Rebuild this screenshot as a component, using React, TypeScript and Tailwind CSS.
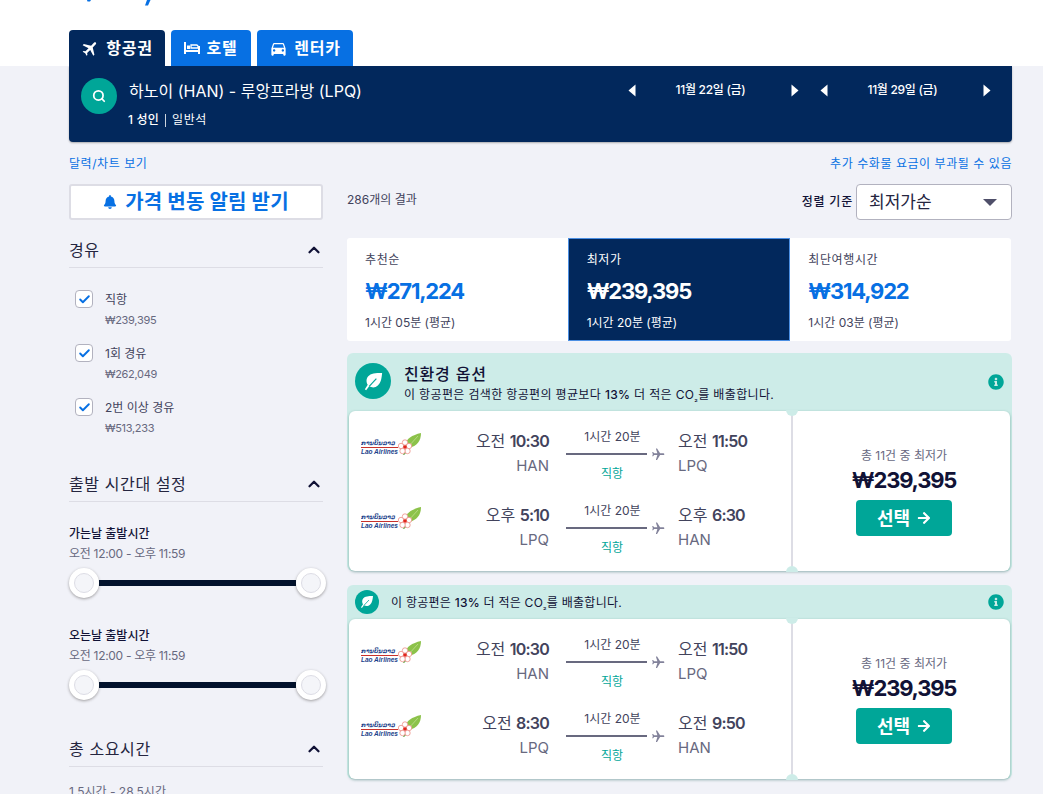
import React from "react";
import { Search, ChevronUp, Check } from "lucide-react";
import { FaBell, FaInfoCircle, FaArrowRight } from "react-icons/fa";
import { MdFlight, MdDirectionsCar } from "react-icons/md";

const FONT = "font-['Inter','Noto_Sans_CJK_KR',sans-serif]";

function Leaf({ size }: { size: number }) {
  return (
    <svg width={size} height={size} viewBox="0 0 24 24" fill="white">
      <path d="M21 3c-7 0-12 .5-14.500 3.500C4 9.500 4.500 13 6 15.500L3 20l1.300 1 3.200-4c2.800 1.600 6.500 1.700 9-.8C20 12.800 20.500 8 21 3z" />
      <path d="M7.500 17 15 9" stroke="#00a698" strokeWidth="1.200" fill="none" />
    </svg>
  );
}

function BedIcon() {
  return (
    <svg width="16" height="12" viewBox="0 0 16 12" fill="white">
      <rect x="0" y="0" width="2" height="12" />
      <rect x="14" y="4" width="2" height="8" />
      <rect x="0" y="8" width="16" height="2" />
      <rect x="3" y="3.500" width="3" height="3.500" />
      <path d="M7 3h5.500a1.500 1.500 0 0 1 1.500 1.500V6H7z" fill="none" stroke="white" strokeWidth="1.300" />
    </svg>
  );
}

function LaoLogo() {
  return (
    <div className="relative w-[60px] h-[22px] shrink-0">
      <div className="absolute left-0 top-[6px] w-[37px] text-[6px] leading-[8px] italic font-bold text-[#1b3f8b] font-['DejaVu_Sans',sans-serif] border-b border-[#c8322b] whitespace-nowrap overflow-hidden">ການບິນລາວ</div>
      <div className="absolute left-0 top-[15px] text-[6.500px] leading-[7px] italic font-extrabold text-[#1b3f8b] font-['Liberation_Sans',sans-serif] whitespace-nowrap">Lao Airlines</div>
      <svg className="absolute left-[36px] top-0" width="24" height="22" viewBox="0 0 24 22">
        <path d="M8 12C9 6 15 2 24 0c0 8-4 13-12 15z" fill="#8cc24a" />
        <path d="M11 14 21 3" stroke="#b5da7f" strokeWidth="1" />
        <path d="M6 22l3-4 1 1-3 3z" fill="#4e9a2e" />
        <circle cx="8" cy="9.500" r="2.700" fill="#fff" stroke="#ec8f88" strokeWidth=".8" />
        <circle cx="12" cy="13" r="2.700" fill="#fff" stroke="#ec8f88" strokeWidth=".8" />
        <circle cx="10.500" cy="18" r="2.700" fill="#fff" stroke="#ec8f88" strokeWidth=".8" />
        <circle cx="5.500" cy="18" r="2.700" fill="#fff" stroke="#ec8f88" strokeWidth=".8" />
        <circle cx="4" cy="13" r="2.700" fill="#fff" stroke="#ec8f88" strokeWidth=".8" />
        <circle cx="8" cy="14" r="1.800" fill="#e2261d" />
      </svg>
    </div>
  );
}

function Clock({ value }: { value: string }) {
  const [half, time] = value.split(" ");
  return (
    <div className="text-[16px] leading-[22px] text-[#42435c] whitespace-nowrap">
      {half} <span className="font-semibold tracking-[-0.8px]">{time}</span>
    </div>
  );
}

function Leg({ dep, from, arr, to }: { dep: string; from: string; arr: string; to: string }) {
  return (
    <div className="flex items-center h-[74px]">
      <div className="w-[70px] ml-[12px] self-start mt-[16px]">
        <LaoLogo />
      </div>
      <div className="w-[118px] text-right">
        <Clock value={dep} />
        <div className="text-[15px] leading-[24px] mt-[2px] text-[#68697f]">{from}</div>
      </div>
      <div className="w-[100px] ml-[17px] shrink-0 pt-[3px]">
        <div className="w-[92px] text-center text-[12px] leading-[18px] pl-[1px] text-[#42435c] whitespace-nowrap">1시간 20분</div>
        <div className="flex items-center gap-[4px] h-[14px] mt-[1px] mb-[4px]">
          <div className="w-[84px] h-[2px] bg-[#68697f]" />
          <MdFlight className="rotate-90 text-[#82829a]" size={15} />
        </div>
        <div className="w-[92px] text-center text-[12px] leading-[18px] text-[#00a698]">직항</div>
      </div>
      <div className="ml-[12px]">
        <Clock value={arr} />
        <div className="text-[15px] leading-[24px] mt-[2px] text-[#68697f]">{to}</div>
      </div>
    </div>
  );
}

function Ticket({ legs }: { legs: [string, string, string, string][] }) {
  return (
    <div className="relative flex h-[160px] mx-[2px] bg-white rounded-[6px] shadow-[0_1px_3px_rgba(0,80,70,0.4)]">
      <div className="w-[444px] py-[6px] border-r-2 border-[#dddde5]">
        {legs.map((l, i) => (
          <Leg key={i} dep={l[0]} from={l[1]} arr={l[2]} to={l[3]} />
        ))}
      </div>
      <div className="flex-1 flex flex-col items-center pt-[36px] pl-[5px]">
        <div className="text-[12px] leading-[17px] text-[#68697f] whitespace-nowrap">총 11건 중 최저가</div>
        <div className="text-[22px] leading-[28px] font-bold tracking-[-1.200px] text-[#111236] mt-[2px]">₩239,395</div>
        <div className="mt-[6px] w-[96px] h-[36px] bg-[#00a698] rounded-[4px] flex items-center justify-center gap-[7px] text-white text-[18px] font-bold">
          선택 <FaArrowRight size={14} />
        </div>
      </div>
      <div className="absolute left-[437px] top-[-1px] w-[12px] h-[6px] rounded-b-full bg-[#cdece8]" />
      <div className="absolute left-[437px] bottom-[-1px] w-[12px] h-[6px] rounded-t-full bg-[#cdece8]" />
    </div>
  );
}

const DIRECT1: [string, string, string, string] = ["오전 10:30", "HAN", "오전 11:50", "LPQ"];

function Co2Text() {
  return (
    <>
      <b className="font-medium">13%</b> 더 적은 CO<sub className="text-[8px] align-baseline">₂</sub>를 배출합니다.
    </>
  );
}

function Section({ title }: { title: string }) {
  return (
    <div className="flex items-center justify-between h-[35px] border-b border-[#dddde5]">
      <span className="text-[16px] tracking-[0.6px] text-[#25253f]">{title}</span>
      <ChevronUp size={18} strokeWidth={3} className="text-[#111236]" />
    </div>
  );
}

function Stop({ label, price }: { label: string; price: string }) {
  return (
    <div className="flex h-[54px] pl-[6px]">
      <div className="w-[18px] h-[18px] mt-[4px] bg-white border border-[#b2b2bf] rounded-[4px] flex items-center justify-center">
        <Check size={13} strokeWidth={3.500} className="text-[#0770e3]" />
      </div>
      <div className="ml-[12px]">
        <div className="text-[12px] leading-[18px] mt-[5px] text-[#42435c]">{label}</div>
        <div className="text-[11px] leading-[16px] mt-[3px] tracking-[-0.3px] text-[#68697f]">{price}</div>
      </div>
    </div>
  );
}

function Handle() {
  return (
    <div className="w-[30px] h-[30px] rounded-full bg-white shadow-[0_1px_3px_rgba(37,32,31,0.4)] flex items-center justify-center shrink-0">
      <div className="w-[20px] h-[20px] rounded-full bg-[#f4f5f9] border border-[#dddde5]" />
    </div>
  );
}

function Slider({ title }: { title: string }) {
  return (
    <div>
      <div className="text-[12px] leading-[18px] font-medium text-[#111236]">{title}</div>
      <div className="text-[12px] leading-[18px] mt-[2px] tracking-[-0.3px] text-[#68697f]">오전 12:00 - 오후 11:59</div>
      <div className="flex items-center mt-[5px] w-[257px]">
        <Handle />
        <div className="flex-1 h-[6px] bg-[#02122c]" />
        <Handle />
      </div>
    </div>
  );
}

function Summary({ label, price, sub, active }: { label: string; price: string; sub: string; active?: boolean }) {
  return (
    <div className={active ? "flex-1 h-full pl-[18px] pt-[12px] bg-[#02285c] border border-[#4b8fe3] text-white" : "flex-1 h-full pl-[18px] pt-[13px] text-[#42435c]"}>
      <div className="text-[12px] leading-[18px] tracking-[0.6px]">{label}</div>
      <div className={active ? "text-[22px] leading-[30px] mt-[7px] font-bold tracking-[-1.200px] text-white" : "text-[22px] leading-[30px] mt-[7px] font-bold tracking-[-1.200px] text-[#0770e3]"}>{price}</div>
      <div className="text-[12px] leading-[18px] mt-[8px]">{sub}</div>
    </div>
  );
}

function Triangle({ left }: { left?: boolean }) {
  return (
    <svg width="8" height="13" viewBox="0 0 8 13" fill="white">
      <path d={left ? "M7.500 .5v12L.5 6.500z" : "M.5 .5v12l7-6z"} />
    </svg>
  );
}

function DateStep({ label }: { label: string }) {
  return (
    <div className="flex items-center justify-between w-[171px]">
      <Triangle left />
      <span className="text-[12px] font-medium tracking-[-0.3px] text-white whitespace-nowrap mr-[6px]">{label}</span>
      <Triangle />
    </div>
  );
}

function Tab({ icon, label, active, w }: { icon: React.ReactNode; label: string; active?: boolean; w: string }) {
  return (
    <div className={`${w} h-[36px] rounded-t-[4px] flex items-center justify-center gap-[6px] text-white text-[16px] font-bold ${active ? "bg-[#02285c]" : "bg-[#0770e3]"}`}>
      {icon}
      <span className="tracking-[0.8px]">{label}</span>
    </div>
  );
}

export default function App() {
  return (
    <div className={`${FONT} w-[1043px] h-[794px] overflow-hidden bg-[#f1f2f8]`}>
      <div className="relative h-[66px] bg-white pl-[69px] pt-[30px]">
        <svg className="absolute left-[85px] top-0" width="68" height="6" viewBox="0 0 68 6" fill="#0770e3">
          <path d="M2 0h4L5 1.500H2.500z" />
          <path d="M62 0h3.500l-2.500 5.500h-3z" />
        </svg>
        <div className="flex gap-[6px]">
          <Tab w="w-[96px]" active label="항공권" icon={<MdFlight size={19} className="rotate-45" />} />
          <Tab w="w-[80px]" label="호텔" icon={<BedIcon />} />
          <Tab w="w-[96px]" label="렌터카" icon={<MdDirectionsCar size={19} />} />
        </div>
      </div>
      <div className="w-[943px] ml-[69px]">
        <div className="h-[76px] bg-[#02285c] rounded-b-[4px] flex items-start pl-[12px] pr-[12px] pt-[12px] shadow-[0_1px_2px_rgba(0,0,0,0.3)]">
          <div className="w-[36px] h-[36px] rounded-full bg-[#00a698] flex items-center justify-center">
            <Search size={14} strokeWidth={3} className="text-white" />
          </div>
          <div className="ml-[12px] mt-[1px] text-white">
            <div className="text-[16px] leading-[24px]">하노이 (HAN) - 루앙프라방 (LPQ)</div>
            <div className="text-[12px] leading-[16px] mt-[9px] flex items-center">
              <span className="font-medium tracking-[0.2px] ml-[-1px]">1 성인</span>
              <span className="w-px h-[13px] bg-white/80 mx-[6px]" />
              <span className="tracking-[0.6px]">일반석</span>
            </div>
          </div>
          <div className="ml-auto flex mt-[3px] mr-[9px] gap-[21px]">
            <DateStep label="11월 22일 (금)" />
            <DateStep label="11월 29일 (금)" />
          </div>
        </div>
        <div className="flex justify-between mt-[13px] text-[12px] leading-[18px] tracking-[0.55px] text-[#0770e3]">
          <span>달력/차트 보기</span>
          <span>추가 수화물 요금이 부과될 수 있음</span>
        </div>
        <div className="flex mt-[11px]">
          <div className="w-[254px] shrink-0">
            <div className="h-[36px] bg-white border-2 border-[#dddde5] rounded-[3px] flex items-center justify-center gap-[8px] text-[#0770e3] text-[20px] font-bold tracking-[0.2px]">
              <FaBell size={14} />
              가격 변동 알림 받기
            </div>
            <div className="mt-[13px]">
              <Section title="경유" />
              <div className="mt-[18px]">
                <Stop label="직항" price="₩239,395" />
                <Stop label="1회 경유" price="₩262,049" />
                <Stop label="2번 이상 경유" price="₩513,233" />
              </div>
            </div>
            <div className="mt-[19px]">
              <Section title="출발 시간대 설정" />
              <div className="mt-[23px]"><Slider title="가는날 출발시간" /></div>
              <div className="mt-[29px]"><Slider title="오는날 출발시간" /></div>
            </div>
            <div className="mt-[32px]">
              <Section title="총 소요시간" />
              <div className="text-[12px] leading-[18px] mt-[16px] text-[#68697f]">1.5시간 - 28.5시간</div>
            </div>
          </div>
          <div className="ml-[24px] flex-1 min-w-0">
            <div className="flex justify-between items-start h-[54px]">
              <div className="text-[12px] leading-[18px] mt-[7px] text-[#42435c]">286개의 결과</div>
              <div className="flex items-center gap-[3px]">
                <span className="text-[12px] font-medium tracking-[0.8px] text-[#111236]">정렬 기준</span>
                <div className="w-[156px] h-[36px] bg-white border border-[#b2b2bf] rounded-[4px] flex items-center justify-between pl-[12px] pr-[14px] pt-[1px] text-[17px] text-[#25253f]">
                  최저가순
                  <svg width="14" height="7" viewBox="0 0 14 7" fill="#4f4f69"><path d="M0 0h14L7 7z" /></svg>
                </div>
              </div>
            </div>
            <div className="flex h-[103px] w-[664px] bg-white rounded-[3px] overflow-hidden">
              <Summary label="추천순" price="₩271,224" sub="1시간 05분 (평균)" />
              <Summary active label="최저가" price="₩239,395" sub="1시간 20분 (평균)" />
              <Summary label="최단여행시간" price="₩314,922" sub="1시간 03분 (평균)" />
            </div>
            <div className="mt-[12px] bg-[#cdece8] rounded-[6px]">
              <div className="h-[58px] flex items-start pl-[8px] pr-[8px] pt-[10px] text-[#111236]">
                <div className="w-[36px] h-[36px] rounded-full bg-[#00a698] flex items-center justify-center">
                  <Leaf size={23} />
                </div>
                <div className="ml-[13px]">
                  <div className="text-[16px] leading-[20px] mt-[1px] font-medium tracking-[0.8px]">친환경 옵션</div>
                  <div className="text-[12px] leading-[18px] mt-[2px] tracking-[0.35px]">이 항공편은 검색한 항공편의 평균보다 <Co2Text /></div>
                </div>
                <FaInfoCircle size={16} className="ml-auto mt-[11px] text-[#00a698]" />
              </div>
              <Ticket legs={[DIRECT1, ["오후 5:10", "LPQ", "오후 6:30", "HAN"]]} />
            </div>
            <div className="mt-[14px] bg-[#cdece8] rounded-[6px]">
              <div className="h-[34px] flex items-center pl-[8px] pr-[8px] text-[#111236]">
                <div className="w-[24px] h-[24px] rounded-full bg-[#00a698] flex items-center justify-center">
                  <Leaf size={16} />
                </div>
                <div className="ml-[12px] mt-[1px] text-[12px] leading-[18px] tracking-[0.25px]">이 항공편은 <Co2Text /></div>
                <FaInfoCircle size={16} className="ml-auto text-[#00a698]" />
              </div>
              <Ticket legs={[DIRECT1, ["오전 8:30", "LPQ", "오전 9:50", "HAN"]]} />
            </div>
          </div>
        </div>
      </div>
    </div>
  );
}
